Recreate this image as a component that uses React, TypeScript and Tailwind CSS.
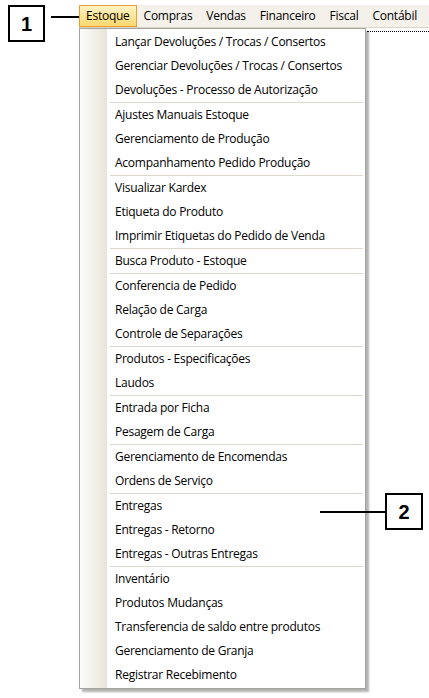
import React from "react";

const groups: string[][] = [
  ["Lançar Devoluções / Trocas / Consertos", "Gerenciar Devoluções / Trocas / Consertos", "Devoluções - Processo de Autorização"],
  ["Ajustes Manuais Estoque", "Gerenciamento de Produção", "Acompanhamento Pedido Produção"],
  ["Visualizar Kardex", "Etiqueta do Produto", "Imprimir Etiquetas do Pedido de Venda"],
  ["Busca Produto - Estoque"],
  ["Conferencia de Pedido", "Relação de Carga", "Controle de Separações"],
  ["Produtos - Especificações", "Laudos"],
  ["Entrada por Ficha", "Pesagem de Carga"],
  ["Gerenciamento de Encomendas", "Ordens de Serviço"],
  ["Entregas", "Entregas - Retorno", "Entregas - Outras Entregas"],
  ["Inventário", "Produtos Mudanças", "Transferencia de saldo entre produtos", "Gerenciamento de Granja", "Registrar Recebimento"],
];

const menus = ["Compras", "Vendas", "Financeiro", "Fiscal", "Contábil"];

const calloutFont = { fontFamily: '"Liberation Sans", Arial, sans-serif' };

export default function App() {
  return (
    <div
      className="relative w-[429px] h-[698px] bg-white overflow-hidden text-black"
      style={{ fontFamily: '"Open Sans", "Noto Sans", sans-serif' }}
    >
      {/* top row: callout 1 + menu bar */}
      <div className="relative z-10 flex items-start h-[28px] pl-[8px] pt-[5px]">
        <div
          className="shrink-0 w-[37px] h-[37px] border-2 border-black bg-white flex items-center justify-center text-[20px] font-bold"
          style={calloutFont}
        >
          1
        </div>
        <div className="shrink-0 ml-[6px] mt-[11px] w-[28px] h-[2px] bg-black" />
        <div className="flex-1 h-[23px] flex items-stretch bg-[#f3f1ea] border-b border-[#dcd6c8] text-[12px] tracking-[-0.25px]">
          <div className="flex items-center px-[6px] border border-[#e5a035] bg-[linear-gradient(to_bottom,#fff3c6,#fbd86e)]">
            Estoque
          </div>
          {menus.map((m) => (
            <div key={m} className="flex items-center px-[7px]">
              {m}
            </div>
          ))}
        </div>
      </div>

      {/* dropdown row */}
      <div className="flex items-start">
        <div className="ml-[79px] w-[287px] border border-[#a5a39d] bg-[linear-gradient(to_right,#fdfcfa_0px,#e8e4d8_27px,#ffffff_27px)] py-[1px] shadow-[3px_3px_2px_rgba(0,0,0,0.3)] text-[12px] tracking-[-0.25px]">
          {groups.map((g, gi) => (
            <div key={gi}>
              {gi > 0 && <div className="ml-[30px] mr-[2px] h-px bg-[#ddd8cc]" />}
              {g.map((t) => (
                <div key={t} className="h-[24px] flex items-center pl-[35px] whitespace-nowrap">
                  {t}
                </div>
              ))}
            </div>
          ))}
        </div>
        <div className="flex-1 mt-[3px] ml-[1px] border-t border-dotted border-black" />
      </div>

      {/* callout 2 (annotation over the page) */}
      <div className="absolute left-[320px] top-[493px] flex items-center">
        <div className="w-[65px] h-[2px] bg-black" />
        <div
          className="w-[38px] h-[37px] border-2 border-black bg-white flex items-center justify-center text-[20px] font-bold"
          style={calloutFont}
        >
          2
        </div>
      </div>
    </div>
  );
}
